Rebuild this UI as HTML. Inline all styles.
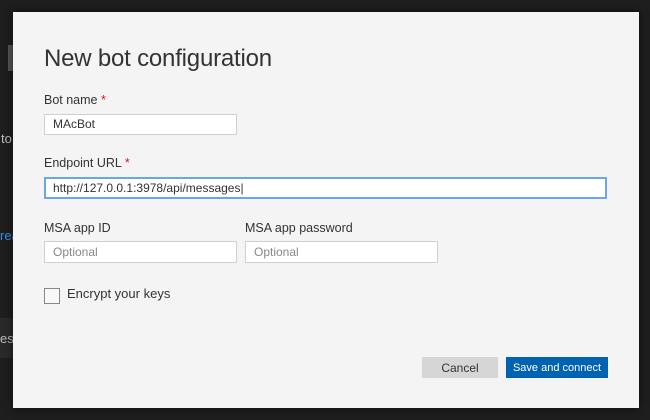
<!DOCTYPE html>
<html><head><style>
*{margin:0;padding:0;box-sizing:border-box}
body{width:650px;height:420px;background:#1e1e1e;position:relative;overflow:hidden;font-family:"Liberation Sans",sans-serif;color:#333}
.a{position:absolute}
.dlg{left:13px;top:12px;width:626px;height:396px;background:#f4f4f4;box-shadow:0 0 8px rgba(0,0,0,.6)}
.lbl{font-size:12.5px;color:#333}
.in{background:#fff;border:1px solid #d0d0d0;font-size:12px;padding-left:8px;line-height:18px}
.req{color:#e81123}
</style></head><body>
<div class="a" style="left:8px;top:45px;width:5px;height:26px;background:#555"></div>
<div class="a" style="left:1px;top:131px;font-size:13px;color:#bbb">to</div>
<div class="a" style="left:0;top:228px;font-size:13px;color:#3b8eea">rea</div>
<div class="a" style="left:0;top:318px;width:14px;height:40px;background:#2a2a2a"></div>
<div class="a" style="left:0;top:331px;font-size:13px;color:#bbb">es</div>
<div class="a dlg"></div>
<div class="a" style="left:44px;top:45px;font-size:24px;color:#333;letter-spacing:-0.2px">New bot configuration</div>
<div class="a lbl" style="left:44px;top:93px">Bot name <span class="req">*</span></div>
<div class="a in" style="left:44px;top:114px;width:193px;height:21px">MAcBot</div>
<div class="a lbl" style="left:44px;top:156px">Endpoint URL <span class="req">*</span></div>
<div class="a in" style="left:44px;top:177px;width:563px;height:22px;border:2px solid #6aa7e8;padding-left:7px">http://127.0.0.1:3978/api/messages|</div>
<div class="a lbl" style="left:44px;top:221px">MSA app ID</div>
<div class="a lbl" style="left:245px;top:221px">MSA app password</div>
<div class="a in" style="left:44px;top:241px;width:193px;height:22px;color:#888;line-height:20px">Optional</div>
<div class="a in" style="left:245px;top:241px;width:193px;height:22px;color:#888;line-height:20px">Optional</div>
<div class="a" style="left:44px;top:288px;width:16px;height:16px;border:1px solid #888;background:#f8f8f8"></div>
<div class="a" style="left:67px;top:286px;font-size:13px">Encrypt your keys</div>
<div class="a" style="left:422px;top:357px;width:76px;height:21px;background:#d6d6d6;font-size:12px;text-align:center;line-height:23px">Cancel</div>
<div class="a" style="left:506px;top:357px;width:102px;height:21px;background:#0063b1;color:#fff;font-size:11px;text-align:center;line-height:23px;white-space:nowrap">Save and connect</div>
</body></html>
